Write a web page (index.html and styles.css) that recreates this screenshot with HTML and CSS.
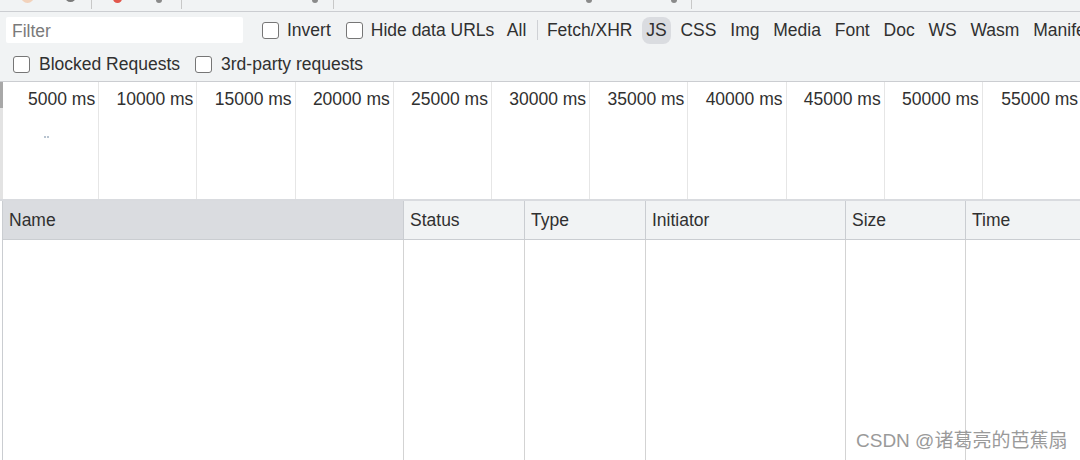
FILE: index.html
```html
<!DOCTYPE html>
<html>
<head>
<meta charset="utf-8">
<link rel="stylesheet" href="styles.css">
</head>
<body>
<div class="page">
  <div class="top-strip">
    <span class="ic peach"></span>
    <span class="ic ring"></span>
    <span class="tsep s1"></span>
    <span class="ic red"></span>
    <span class="ic tiny t1"></span>
    <span class="tsep s2"></span>
    <span class="ic tiny t2"></span>
    <span class="tsep s3"></span>
    <span class="ic tiny t3"></span>
    <span class="ic tiny t4"></span>
    <span class="tsep s4"></span>
  </div>

  <div class="filter-bar">
    <div class="row row1">
      <div class="filter-input">Filter</div>
      <label class="chk first"><span class="box"></span>Invert</label>
      <label class="chk"><span class="box"></span>Hide data URLs</label>
      <span class="type-btn all">All</span>
      <span class="vsep"></span>
      <span class="type-btn fetch">Fetch/XHR</span>
      <span class="type-btn active">JS</span>
      <span class="type-btn">CSS</span>
      <span class="type-btn">Img</span>
      <span class="type-btn">Media</span>
      <span class="type-btn">Font</span>
      <span class="type-btn">Doc</span>
      <span class="type-btn">WS</span>
      <span class="type-btn">Wasm</span>
      <span class="type-btn">Manifest</span>
    </div>
    <div class="row row2">
      <label class="chk c1"><span class="box"></span>Blocked Requests</label>
      <label class="chk c2"><span class="box"></span>3rd-party requests</label>
    </div>
  </div>

  <div class="timeline">
    <span class="handle"></span>
    <div class="tcell"><div class="tlabel">5000 ms</div><div class="tmark"></div></div>
    <div class="tcell"><div class="tlabel">10000 ms</div></div>
    <div class="tcell"><div class="tlabel">15000 ms</div></div>
    <div class="tcell"><div class="tlabel">20000 ms</div></div>
    <div class="tcell"><div class="tlabel">25000 ms</div></div>
    <div class="tcell"><div class="tlabel">30000 ms</div></div>
    <div class="tcell"><div class="tlabel">35000 ms</div></div>
    <div class="tcell"><div class="tlabel">40000 ms</div></div>
    <div class="tcell"><div class="tlabel">45000 ms</div></div>
    <div class="tcell"><div class="tlabel">50000 ms</div></div>
    <div class="tcell last"><div class="tlabel">55000 ms</div></div>
  </div>

  <div class="table">
    <div class="th sorted">Name</div>
    <div class="th">Status</div>
    <div class="th">Type</div>
    <div class="th">Initiator</div>
    <div class="th">Size</div>
    <div class="th">Time</div>
    <div class="td first"></div>
    <div class="td"></div>
    <div class="td"></div>
    <div class="td"></div>
    <div class="td"></div>
    <div class="td"></div>
  </div>

  <div class="watermark">CSDN @诸葛亮的芭蕉扇</div>
</div>
</body>
</html>
```

FILE: styles.css
```css
* { box-sizing: border-box; }
html, body {
  margin: 0;
  padding: 0;
  background: #ffffff;
}
body {
  font-family: "Liberation Sans", Arial, Helvetica, sans-serif;
  font-size: 17.5px;
  color: #303030;
}
.page {
  position: relative;
  width: 1080px;
  height: 460px;
  overflow: hidden;
  display: flex;
  flex-direction: column;
}

/* top cut-off toolbar */
.top-strip {
  height: 12px;
  flex: none;
  background: #f1f3f4;
  border-bottom: 1px solid #cbcdd1;
  display: flex;
  align-items: flex-start;
  overflow: hidden;
}
.ic {
  flex: none;
  display: block;
  border-radius: 50%;
}
.peach { width: 13px; height: 13px; margin-left: 21px; margin-top: -10px; background: #f2d2bb; }
.ring { width: 11px; height: 11px; margin-left: 31px; margin-top: -9px; border: 2px solid #7a7a7a; }
.tsep { flex: none; width: 1px; height: 9px; background: #c8c8c8; }
.s1 { margin-left: 15px; }
.red { width: 9px; height: 9px; margin-left: 21px; margin-top: -6px; background: #e2574c; }
.tiny { width: 6px; height: 6px; margin-top: -3px; background: #8a8a8a; }
.t1 { margin-left: 34px; }
.s2 { margin-left: 19px; }
.t2 { margin-left: 130px; }
.s3 { margin-left: 15px; }
.t3 { margin-left: 252px; }
.t4 { margin-left: 79px; }
.s4 { margin-left: 14px; }

/* filter bar */
.filter-bar {
  flex: none;
  background: #f1f3f4;
  border-bottom: 1px solid #cbcdd1;
}
.row {
  display: flex;
  align-items: center;
  white-space: nowrap;
}
.row1 { height: 36px; }
.row2 { height: 33px; }
.filter-input {
  flex: none;
  margin-left: 6px;
  width: 237px;
  height: 26px;
  background: #ffffff;
  color: #7a7a7a;
  padding-left: 6px;
  line-height: 28px;
  border-radius: 2px;
}
.chk {
  display: flex;
  align-items: center;
  color: #303030;
  margin-left: 15px;
}
.chk.first { margin-left: 19px; }
.box {
  display: block;
  width: 17px;
  height: 17px;
  border: 1.5px solid #767676;
  border-radius: 3px;
  background: #ffffff;
  margin-right: 8px;
}
.row2 .chk.c1 { margin-left: 13px; }
.row2 .chk.c2 { margin-left: 15px; }
.row2 .box { margin-right: 9px; }

.type-btn {
  flex: none;
  padding: 0 4px;
  height: 27px;
  line-height: 27px;
  border-radius: 8px;
  margin-left: 5.8px;
  color: #303030;
}
.type-btn.all { margin-left: 8.5px; }
.type-btn.fetch { margin-left: 5px; }
.type-btn.active { background: #dadce0; }
.vsep {
  flex: none;
  width: 1px;
  height: 20px;
  background: #cfd1d5;
  margin-left: 6.6px;
}

/* timeline overview */
.timeline {
  position: relative;
  flex: none;
  height: 119px;
  display: grid;
  grid-template-columns: repeat(11, 98.2px);
  padding-left: 1px;
  background: #ffffff;
  border-bottom: 2px solid #d9dbdf;
}
.handle {
  position: absolute;
  left: 0;
  top: 0;
  width: 3px;
  height: 100%;
  background: #e3e3e3;
  border-top: 26px solid #a8a8a8;
}
.tcell {
  border-right: 1px solid #e6e6e6;
}
.tcell.last { border-right: none; }
.tlabel {
  text-align: right;
  padding-right: 3px;
  padding-top: 7px;
  line-height: 20px;
  color: #303030;
}
.tmark {
  width: 5px;
  height: 2px;
  margin-left: 43px;
  margin-top: 27px;
  border-left: 2px solid #b8c4d0;
  border-right: 2px solid #b8c4d0;
}

/* table */
.table {
  flex: 1;
  display: grid;
  grid-template-columns: 400px 121px 121px 200px 120px 1fr;
  grid-template-rows: 39px 1fr;
  margin-left: 2px;
  border-left: 1px solid #cacdd1;
}
.th {
  background: #f1f3f4;
  border-bottom: 1px solid #cacdd1;
  border-left: 1px solid #cacdd1;
  padding-left: 6px;
  line-height: 38px;
  color: #303030;
}
.th.sorted {
  background: #dadce0;
  border-left: none;
  padding-left: 6px;
}
.td {
  border-left: 1px solid #d3d3d3;
  background: #ffffff;
}
.td.first { border-left: none; }

/* overlay watermark */
.watermark {
  position: absolute;
  left: 856px;
  top: 429px;
  font-family: "Liberation Sans", "Noto Sans CJK SC", sans-serif;
  font-size: 19px;
  line-height: 24px;
  color: #9a9a9a;
  white-space: nowrap;
}
```
